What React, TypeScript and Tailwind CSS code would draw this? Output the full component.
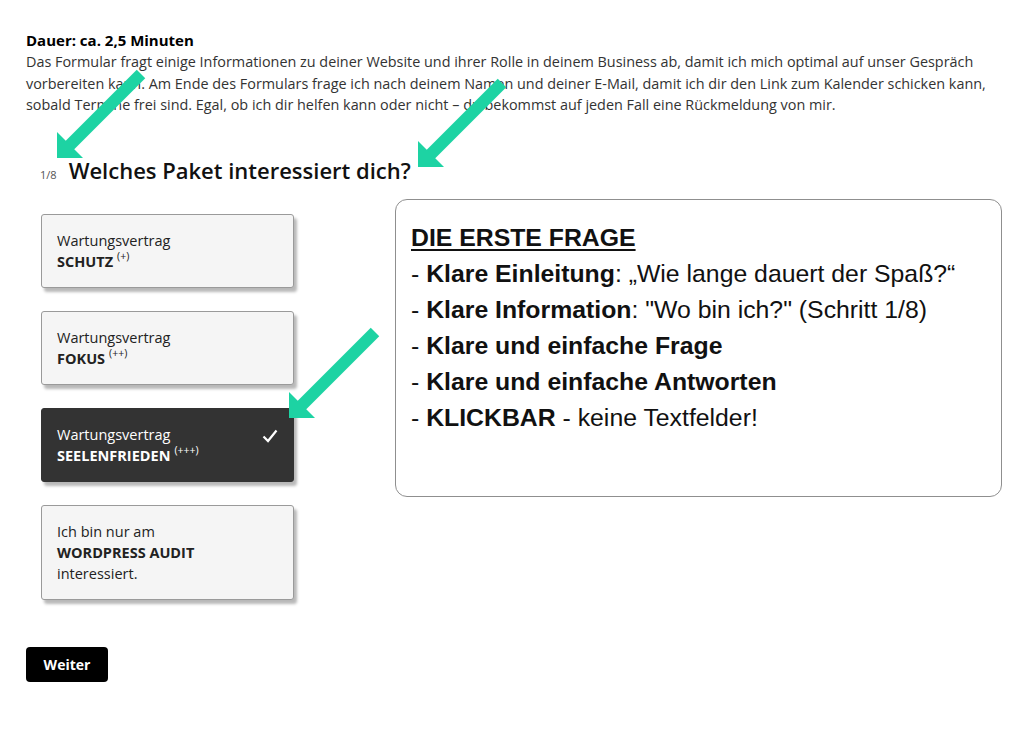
import React from 'react';

// ---------- Data ----------
interface Option {
  id: string;
  top: string;
  bold: string;
  sup?: string;
  after?: string;
  selected?: boolean;
}

const options: Option[] = [
  { id: 'schutz', top: 'Wartungsvertrag', bold: 'SCHUTZ', sup: '(+)' },
  { id: 'fokus', top: 'Wartungsvertrag', bold: 'FOKUS', sup: '(++)' },
  { id: 'seelenfrieden', top: 'Wartungsvertrag', bold: 'SEELENFRIEDEN', sup: '(+++)', selected: true },
  { id: 'audit', top: 'Ich bin nur am', bold: 'WORDPRESS AUDIT', after: 'interessiert.' },
];

const formFont = { fontFamily: '"Open Sans", "Noto Sans", sans-serif' };

// ---------- Annotation arrow (tip at x,y, tail up-right) ----------
const Arrow = ({ x, y, len }: { x: number; y: number; len: number }) => (
  <g>
    <line x1={x + len} y1={y - len} x2={x + 11} y2={y - 11} stroke="#1dd3a3" strokeWidth={12} />
    <polygon points={`${x},${y} ${x},${y - 26} ${x + 26},${y}`} fill="#1dd3a3" />
  </g>
);

const OptionCard = ({ o }: { o: Option }) => (
  <button
    className={`w-[253px] text-left rounded-[3px] border px-[15px] py-[15px] text-[14.5px] leading-[21px] shadow-[3px_4px_3px_rgba(0,0,0,0.28)] ${
      o.selected ? 'bg-[#333333] border-[#333333] text-white' : 'bg-[#f5f5f5] border-[#9a9a9a] text-[#222]'
    }`}
    style={formFont}
  >
    <div className="flex items-start justify-between">
      <div>
        <div>{o.top}</div>
        <div>
          <span className="font-bold">{o.bold}</span>
          {o.sup && <sup className="ml-1 text-[10.5px] -top-[7px]">{o.sup}</sup>}
        </div>
        {o.after && <div>{o.after}</div>}
      </div>
      {o.selected && (
        <svg width="16" height="14" viewBox="0 0 16 14" className="mt-[5px]">
          <path d="M1.5 7.5 L6 12 L14.5 1.5" fill="none" stroke="#fff" strokeWidth="2.2" />
        </svg>
      )}
    </div>
  </button>
);

// ---------- Page ----------
export default function App() {
  return (
    <main className="relative w-[1024px] h-[730px] bg-white overflow-hidden">
      <div className="px-[26px] pt-[30px]" style={formFont}>
        {/* --- Intro --- */}
        <p className="text-[15px] leading-[21px] font-bold text-black">Dauer: ca. 2,5 Minuten</p>
        <p className="w-[975px] text-[14.4px] leading-[21.5px] text-[#333]">
          Das Formular fragt einige Informationen zu deiner Website und ihrer Rolle in deinem Business ab, damit ich mich optimal auf unser Gespräch vorbereiten kann. Am Ende des Formulars frage ich nach deinem Namen und deiner E-Mail, damit ich dir den Link zum Kalender schicken kann, sobald Termine frei sind. Egal, ob ich dir helfen kann oder nicht – du bekommst auf jeden Fall eine Rückmeldung von mir.
        </p>

        {/* --- Question --- */}
        <div className="mt-[38px] flex items-baseline pl-[14px]">
          <span className="text-[11px] text-[#555] mr-[12px]">1/8</span>
          <h2 className="text-[22px] font-semibold text-[#111]">Welches Paket interessiert dich?</h2>
        </div>

        {/* --- Options + annotation --- */}
        <div className="mt-[12px] flex items-start">
          <div className="ml-[15px] mt-[15px] flex flex-col gap-[23px] shrink-0">
            {options.map((o) => (
              <OptionCard key={o.id} o={o} />
            ))}
          </div>

          <div
            className="ml-[101px] w-[607px] h-[298px] shrink-0 rounded-[12px] border border-[#8f8f8f] px-[15px] pt-[20px] text-[24.8px] leading-[36px] text-[#111]"
            style={{ fontFamily: '"Liberation Sans", Arial, sans-serif' }}
          >
            <div className="font-bold underline underline-offset-[3px] decoration-[2px]">DIE ERSTE FRAGE</div>
            <div>- <b>Klare Einleitung</b>: „Wie lange dauert der Spaß?“</div>
            <div>- <b>Klare Information</b>: "Wo bin ich?" (Schritt 1/8)</div>
            <div>- <b>Klare und einfache Frage</b></div>
            <div>- <b>Klare und einfache Antworten</b></div>
            <div>- <b>KLICKBAR</b> - keine Textfelder!</div>
          </div>
        </div>

        {/* --- Submit --- */}
        <button className="mt-[47px] h-[35px] w-[82px] rounded-[4px] bg-black text-white text-[14px] font-bold">
          Weiter
        </button>
      </div>

      {/* --- Annotation arrows --- */}
      <svg className="absolute inset-0 pointer-events-none" width="1024" height="730">
        <Arrow x={57} y={158} len={84} />
        <Arrow x={418} y={167} len={84} />
        <Arrow x={289} y={418} len={86} />
      </svg>
    </main>
  );
}
